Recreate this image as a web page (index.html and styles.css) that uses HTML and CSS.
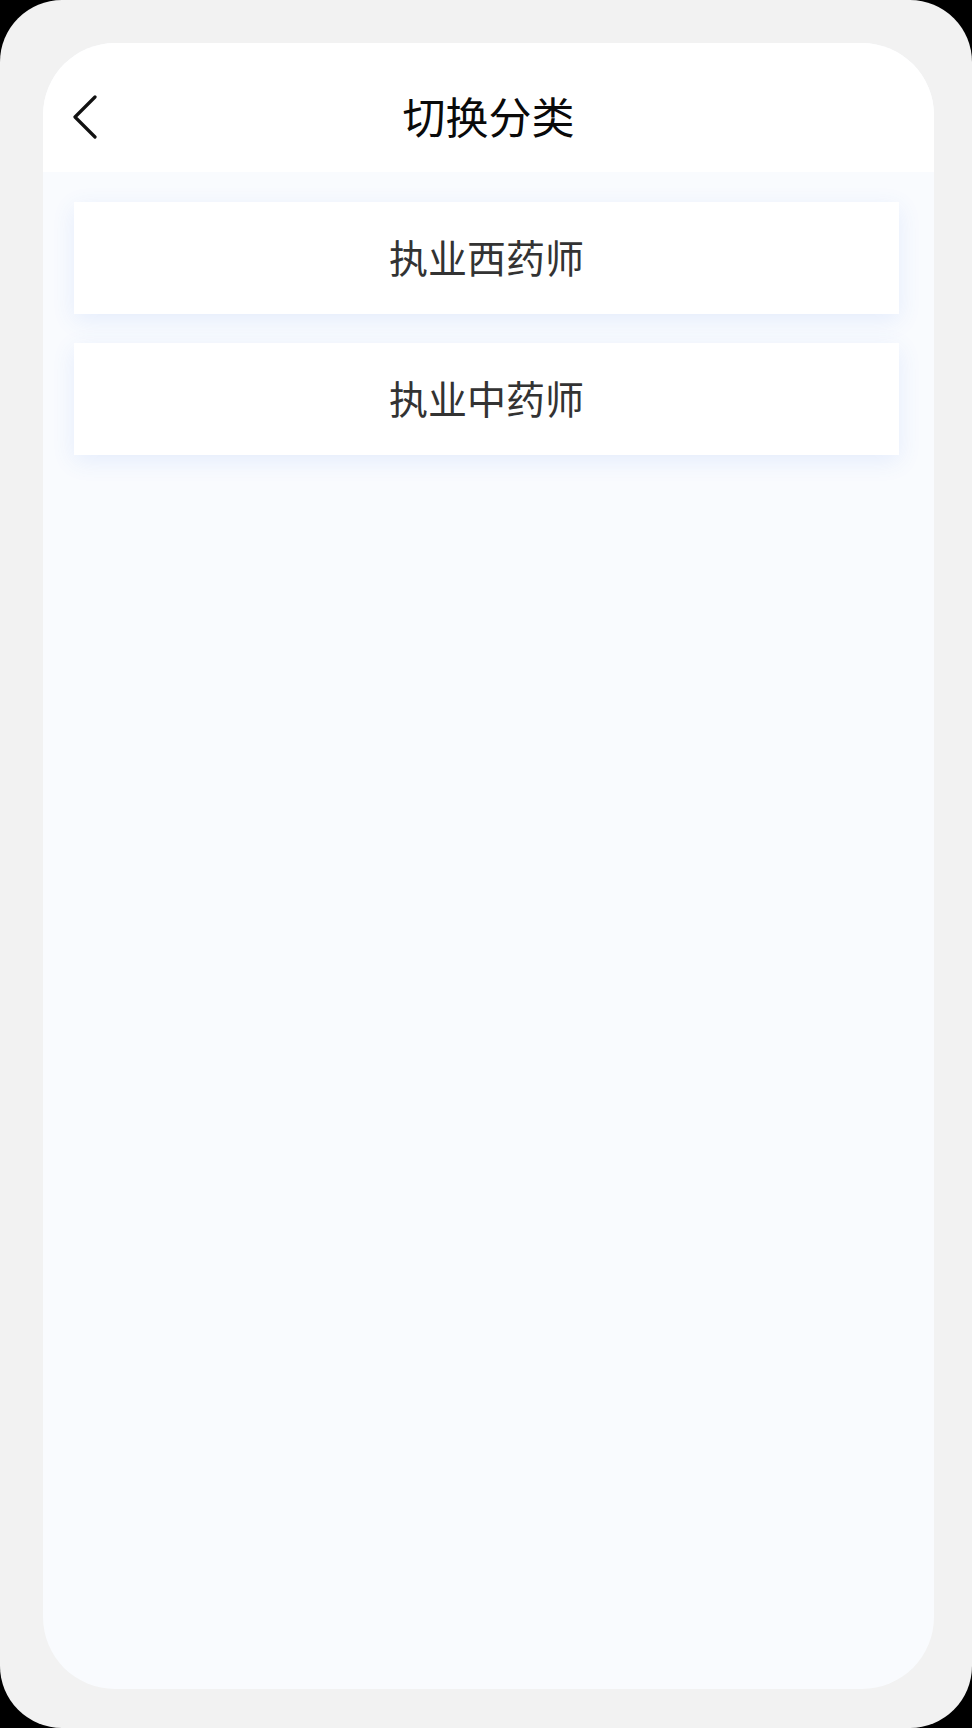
FILE: index.html
```html
<!DOCTYPE html>
<html lang="zh-CN">
<head>
<meta charset="utf-8">
<title>切换分类</title>
<link rel="stylesheet" href="styles.css">
</head>
<body>
<div class="frame">
  <div class="screen">
    <header class="header">
      <div class="back">
        <svg width="26" height="44" viewBox="0 0 26 44" fill="none">
          <polyline points="23,2 3,22 23,42" stroke="#111" stroke-width="3.2" stroke-linecap="round" stroke-linejoin="round"/>
        </svg>
      </div>
      <h1 class="title">切换分类</h1>
      <div class="spacer"></div>
    </header>
    <main class="content">
      <div class="item">执业西药师</div>
      <div class="item">执业中药师</div>
    </main>
  </div>
</div>
</body>
</html>
```
FILE: styles.css
```css
html, body {
  margin: 0;
  padding: 0;
  background: #000;
}
body {
  font-family: "Noto Sans CJK SC", "Noto Sans", sans-serif;
}
.frame {
  width: 972px;
  height: 1728px;
  box-sizing: border-box;
  background: #f2f2f2;
  border-radius: 62px;
  padding: 43px 38px 39px 43px;
}
.screen {
  width: 891px;
  height: 1646px;
  background: #f9fbfe;
  border-radius: 72px;
  overflow: hidden;
  display: flex;
  flex-direction: column;
}
.header {
  height: 129px;
  box-sizing: border-box;
  padding-top: 16px;
  background: #fff;
  display: grid;
  grid-template-columns: 1fr auto 1fr;
  align-items: center;
}
.back {
  padding-left: 29px;
  padding-top: 2px;
  display: flex;
  align-items: center;
}
.back svg {
  display: block;
}
.title {
  margin: 0;
  font-size: 43px;
  font-weight: 400;
  color: #0a0a0a;
  line-height: 1;
}
.content {
  padding: 30px 35px 0 31px;
  display: flex;
  flex-direction: column;
  gap: 29px;
}
.item {
  height: 112px;
  box-sizing: border-box;
  padding-bottom: 4px;
  background: #fff;
  display: flex;
  align-items: center;
  justify-content: center;
  font-size: 39px;
  color: #333;
  box-shadow: 0 6px 22px rgba(60, 120, 235, 0.11);
}
```
